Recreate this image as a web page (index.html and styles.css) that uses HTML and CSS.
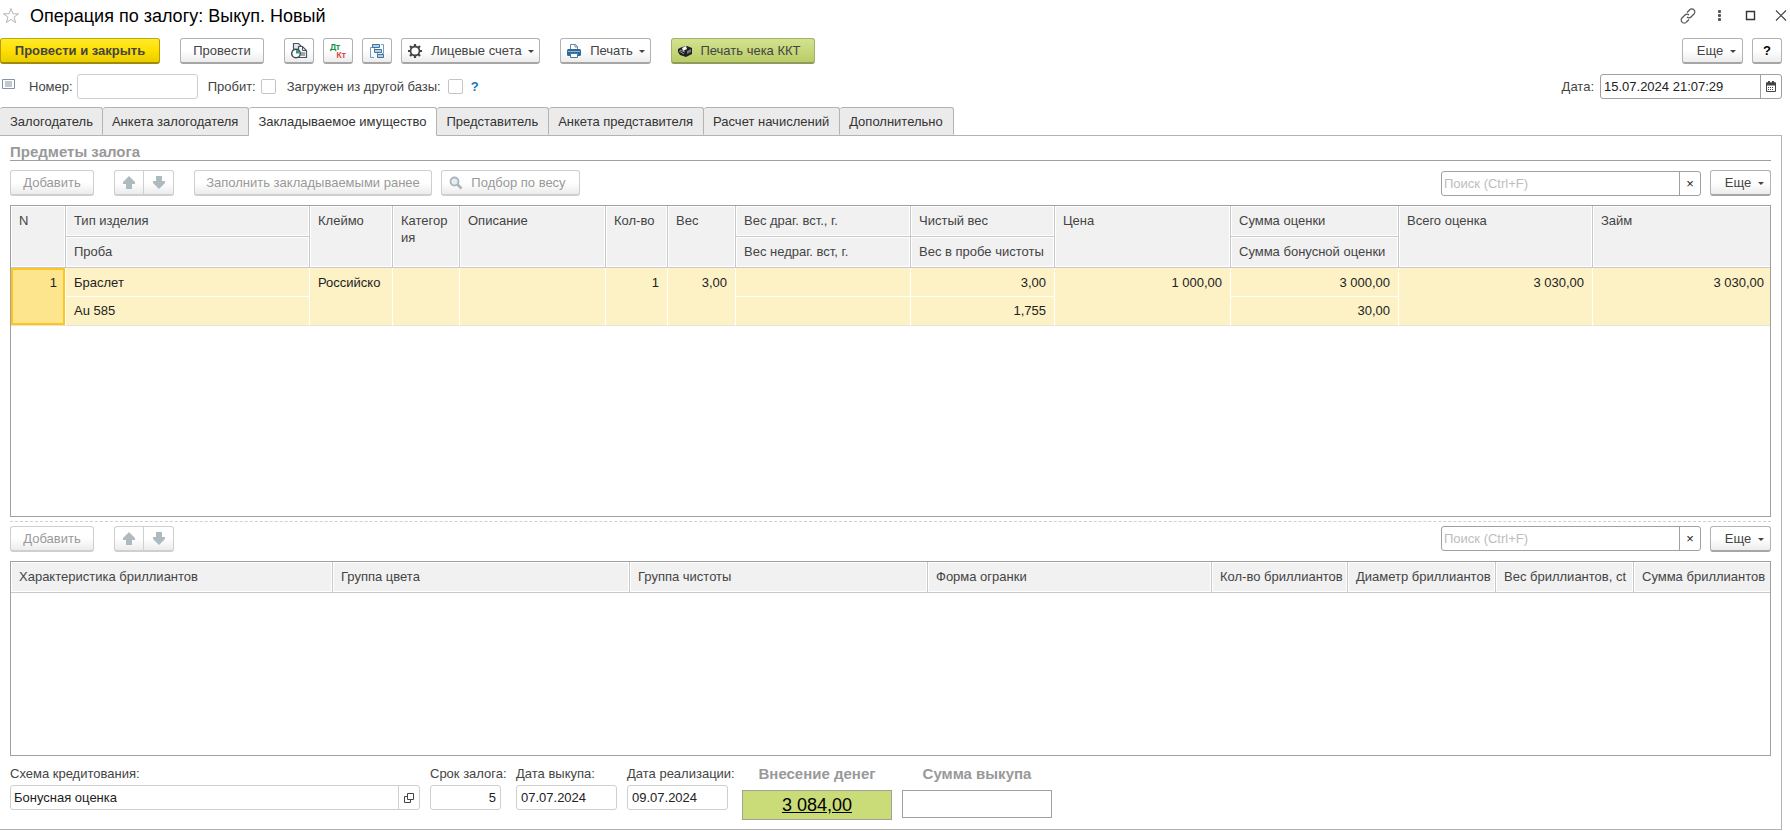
FILE: index.html
```html
<!DOCTYPE html>
<html lang="ru">
<head>
<meta charset="utf-8">
<title>Операция по залогу: Выкуп. Новый</title>
<link rel="stylesheet" href="styles.css">
</head>
<body>
<svg class="defs" width="0" height="0" aria-hidden="true">
  <symbol id="up" viewBox="0 0 12 13"><path d="M6 0l6 6v2H9v5H3V8H0V6z" fill="currentColor"/></symbol>
  <symbol id="down" viewBox="0 0 12 13"><path d="M6 13l6-6V5H9V0H3v5H0v2z" fill="currentColor"/></symbol>
</svg>
<main class="window">
  <header class="titlebar">
    <button class="plain" aria-label="В избранное"><svg width="18" height="18" viewBox="0 0 18 18"><path d="M9 1.500l1.900 5.300h5.600l-4.500 3.400 1.700 5.500L9 12.400l-4.700 3.300L6 10.200 1.500 6.800h5.600z" fill="#fff" stroke="#b4b4b4"/></svg></button>
    <h1>Операция по залогу: Выкуп. Новый</h1>
    <div class="window-tools">
      <button class="plain" aria-label="Ссылка"><svg width="16" height="16" viewBox="0 0 16 16" fill="none" stroke="#555" stroke-width="1.200"><path d="M7 4.500l2.500-2.500a2.700 2.700 0 0 1 4.500 0 2.800 2.800 0 0 1 0 4L11 9a2.700 2.700 0 0 1-4 0M9 11.500L6.500 14a2.700 2.700 0 0 1-4.500 0 2.800 2.800 0 0 1 0-4L5 7a2.700 2.700 0 0 1 4 0"/></svg></button>
      <button class="plain" aria-label="Меню"><svg width="16" height="16" viewBox="0 0 16 16" fill="#555"><rect x="7" y="2" width="3" height="3" rx="1"/><rect x="7" y="6" width="3" height="3" rx="1"/><rect x="7" y="10" width="3" height="3" rx="1"/></svg></button>
      <button class="plain" aria-label="Развернуть"><svg width="16" height="16" viewBox="0 0 16 16"><path d="M4.500 3.500h8v8h-8z" fill="none" stroke="#333" stroke-width="1.400"/></svg></button>
      <button class="plain" aria-label="Закрыть"><svg width="16" height="16" viewBox="0 0 16 16"><path d="M3 2.500l10 10M13 2.500l-10 10" stroke="#444" stroke-width="1.200"/></svg></button>
    </div>
  </header>

  <div class="commands">
    <button class="btn primary">Провести и закрыть</button>
    <button class="btn post">Провести</button>
    <div class="group">
      <button class="btn square" aria-label="Структура подчиненности"><svg width="18" height="18" viewBox="0 0 18 18"><path d="M3.500 12V1.500h5l3 3v2" fill="#e4e9ee" stroke="#4a5563" stroke-width="1.200"/><path d="M8.500 4.500h4l4 4v7h-8z" fill="#f3f5f7" stroke="#4a5563" stroke-width="1.200"/><path d="M12.500 4.500v4h4M11 11h4M11 13h4" fill="none" stroke="#4a5563"/><circle cx="6" cy="11.500" r="4.300" fill="#fff" stroke="#3d4956" stroke-width="1.500"/><path d="M6 11.500V8a3.500 3.500 0 0 1 3.500 3.500z" fill="#28a55b"/></svg></button>
      <button class="btn square dtkt" aria-label="Движения документа"><span class="dt">Дт</span><span class="kt">Кт</span></button>
      <button class="btn square" aria-label="Связанные документы"><svg width="16" height="16" viewBox="0 0 16 16" fill="none" stroke="#6f9cc0"><path d="M4 4.500H1.500v10H5M12 1.500h2.500v9H13M5.500 4.500v3M8.500 9.500v3"/><path d="M3.500 1.500h7v3h-7zM5.500 6.500h7v3h-7zM8.500 11.500h6v3h-6z" fill="#b4cfe4" stroke="#41729d"/></svg></button>
      <button class="btn accounts"><svg width="16" height="16" viewBox="0 0 16 16" fill="none" stroke="#444"><circle cx="8" cy="8" r="4.500" stroke-width="1.800"/><path d="M8 1v2.500M8 12.500V15M1 8h2.500M12.500 8H15M3 3l2 2M11 11l2 2M3 13l2-2M11 5l2-2" stroke-width="2.200"/></svg>Лицевые счета<i class="caret"></i></button>
    </div>
    <button class="btn print"><svg width="16" height="16" viewBox="0 0 16 16"><path d="M4.500 7V1.500h5l2 2V7" fill="#fff" stroke="#6d87a3"/><path d="M9 1v3h3" fill="none" stroke="#6d87a3"/><rect x="1" y="6" width="14" height="7" rx="1.500" fill="#2f689b"/><path d="M2 8.500h12" stroke="#94b6d0"/><path d="M4.500 10.500h7v4h-7z" fill="#fff" stroke="#48779f"/></svg>Печать<i class="caret"></i></button>
    <button class="btn receipt"><svg width="16" height="14" viewBox="0 0 16 14"><path d="M1 5l4-2 5-1 5 2v6l-6 3-6-2-2-3z" fill="#202020"/><path d="M5 4l4-2 1 3-4 2z" fill="#f4f4f4"/><path d="M10 7l4-2v3l-4 2z" fill="#777"/><path d="M2 7l5 3M3 6l5 2" stroke="#999" stroke-width="1"/></svg>Печать чека ККТ</button>
    <button class="btn more end">Еще<i class="caret"></i></button>
    <button class="btn square help">?</button>
  </div>

  <div class="fields">
    <svg class="note" width="13" height="11" viewBox="0 0 13 11" fill="none" stroke="#8293a5"><path d="M.5.5h12v9H.5z"/><path d="M3 3h7M3 5h7M3 7h7"/></svg>
    <label for="number">Номер:</label><input class="box number" id="number" type="text">
    <label for="fiscal">Пробит:</label><input class="check first" id="fiscal" type="checkbox">
    <label for="loaded">Загружен из другой базы:</label><input class="check" id="loaded" type="checkbox">
    <button class="plain hint" aria-label="Подсказка">?</button>
    <label class="end" for="date">Дата:</label>
    <div class="box combo dark date"><input id="date" type="text" value="15.07.2024 21:07:29"><button aria-label="Календарь"><svg width="10" height="11" viewBox="0 0 10 11"><path d="M.5 2h9v8.500h-9z" fill="#fff" stroke="#444"/><path d="M0 1.500h10v3H0zM2 0h2v2H2zM6 0h2v2H6z" fill="#444"/><path d="M2 6.500h6M2 8.500h6" stroke="#444" stroke-dasharray="1 1"/></svg></button></div>
  </div>

  <nav class="tabs" role="tablist">
    <button role="tab">Залогодатель</button><button role="tab">Анкета залогодателя</button><button role="tab" aria-selected="true">Закладываемое имущество</button><button role="tab">Представитель</button><button role="tab">Анкета представителя</button><button role="tab">Расчет начислений</button><button role="tab">Дополнительно</button>
  </nav>

  <section class="panel">
    <h2>Предметы залога</h2>
    <div class="tools">
      <button class="btn add" disabled>Добавить</button>
      <div class="arrows"><button class="btn" disabled aria-label="Вверх"><svg width="12" height="13"><use href="#up"/></svg></button><button class="btn" disabled aria-label="Вниз"><svg width="12" height="13"><use href="#down"/></svg></button></div>
      <button class="btn fill" disabled>Заполнить закладываемыми ранее</button>
      <button class="btn pick" disabled><svg width="14" height="14" viewBox="0 0 14 14"><circle cx="5.500" cy="5.500" r="4" fill="#e8edf0" stroke="#a9b4bb" stroke-width="1.800"/><path d="M8.500 8.500l4 4" stroke="#a9b4bb" stroke-width="2.500"/></svg>Подбор по весу</button>
      <div class="box combo dark search end"><input type="text" placeholder="Поиск (Ctrl+F)" aria-label="Поиск предметов"><button aria-label="Очистить">×</button></div>
      <button class="btn more small">Еще<i class="caret"></i></button>
    </div>

    <div class="grid items">
      <table>
        <colgroup><col class="w55"><col class="w244"><col class="w83"><col class="w67"><col class="w146"><col class="w62"><col class="w68"><col class="w175"><col class="w144"><col class="w176"><col class="w168"><col class="w194"><col class="w179"></colgroup>
        <thead>
          <tr><th rowspan="2">N</th><th>Тип изделия</th><th rowspan="2">Клеймо</th><th rowspan="2" class="wrap">Категория</th><th rowspan="2">Описание</th><th rowspan="2">Кол-во</th><th rowspan="2">Вес</th><th>Вес драг. вст., г.</th><th>Чистый вес</th><th rowspan="2">Цена</th><th>Сумма оценки</th><th rowspan="2">Всего оценка</th><th rowspan="2">Займ</th></tr>
          <tr><th>Проба</th><th>Вес недраг. вст, г.</th><th>Вес в пробе чистоты</th><th>Сумма бонусной оценки</th></tr>
        </thead>
        <tbody>
          <tr><td rowspan="2" class="num current">1</td><td>Браслет</td><td rowspan="2">Российско</td><td rowspan="2"></td><td rowspan="2"></td><td rowspan="2" class="num">1</td><td rowspan="2" class="num">3,00</td><td></td><td class="num">3,00</td><td rowspan="2" class="num">1 000,00</td><td class="num">3 000,00</td><td rowspan="2" class="num">3 030,00</td><td rowspan="2" class="num">3 030,00</td></tr>
          <tr><td>Au 585</td><td></td><td class="num">1,755</td><td class="num">30,00</td></tr>
        </tbody>
      </table>
    </div>

    <hr class="splitter">

    <div class="tools lower">
      <button class="btn add" disabled>Добавить</button>
      <div class="arrows"><button class="btn" disabled aria-label="Вверх"><svg width="12" height="13"><use href="#up"/></svg></button><button class="btn" disabled aria-label="Вниз"><svg width="12" height="13"><use href="#down"/></svg></button></div>
      <div class="box combo dark search end"><input type="text" placeholder="Поиск (Ctrl+F)" aria-label="Поиск бриллиантов"><button aria-label="Очистить">×</button></div>
      <button class="btn more small">Еще<i class="caret"></i></button>
    </div>

    <div class="grid stones">
      <table>
        <colgroup><col class="w322"><col class="w297"><col class="w298"><col class="w284"><col class="w136"><col class="w148"><col class="w138"><col class="w138"></colgroup>
        <thead><tr><th>Характеристика бриллиантов</th><th>Группа цвета</th><th>Группа чистоты</th><th>Форма огранки</th><th>Кол-во бриллиантов</th><th>Диаметр бриллиантов</th><th>Вес бриллиантов, ct</th><th>Сумма бриллиантов</th></tr></thead>
      </table>
    </div>

    <div class="summary">
      <div class="field scheme"><label for="scheme">Схема кредитования:</label><div class="box combo"><input id="scheme" type="text" value="Бонусная оценка"><button aria-label="Открыть"><svg width="10" height="10" viewBox="0 0 10 10" fill="none" stroke="#444"><path d="M3.500.5h6v6h-6z"/><path d="M3 3.500H.5v6h6V7"/></svg></button></div></div>
      <div class="field term"><label for="term">Срок залога:</label><input class="box" id="term" type="text" value="5"></div>
      <div class="field redeem"><label for="redeem">Дата выкупа:</label><input class="box" id="redeem" type="text" value="07.07.2024"></div>
      <div class="field sale"><label for="sale">Дата реализации:</label><input class="box" id="sale" type="text" value="09.07.2024"></div>
      <div class="field total"><span class="caption">Внесение денег</span><a class="amount" href="#">3 084,00</a></div>
      <div class="field total"><label class="caption" for="sum">Сумма выкупа</label><input class="sum" id="sum" type="text"></div>
    </div>
  </section>
</main>
</body>
</html>
```

FILE: styles.css
```css
* { box-sizing: border-box; }

body {
  margin: 0;
  background: #fff;
  color: #444;
  font: 13px/17px "Liberation Sans", Arial, sans-serif;
}

button, input { font: inherit; color: inherit; }
button { padding: 0; }
svg { flex: none; display: block; }
.defs { position: absolute; }

.window {
  display: flex;
  flex-direction: column;
  min-height: 100vh;
  padding-bottom: 1px;
}

.plain { border: 0; background: none; }
.end { margin-left: auto; }

/* Title */
.titlebar {
  display: flex;
  align-items: center;
  height: 31px;
  padding-left: 2px;
}
h1 {
  margin: 0 0 0 10px;
  font-size: 18px;
  line-height: 22px;
  font-weight: 400;
  color: #000;
}
.window-tools { display: flex; gap: 15px; margin-left: auto; padding-right: 1px; }

/* Command bar */
.commands {
  display: flex;
  align-items: center;
  gap: 20px;
  padding: 7px 8px 0 0;
}
.group { display: flex; gap: 9px; }

.btn {
  display: flex;
  align-items: center;
  justify-content: center;
  height: 26px;
  border: 1px solid #b3b3b3;
  border-bottom: 2px solid #a6a6a6;
  border-radius: 3px;
  background: linear-gradient(#fff 50%, #ececec);
  color: #444;
  white-space: nowrap;
}
.btn:disabled { border-color: #cfcfcf; color: #999; }
.btn:disabled svg { color: #afb9c0; }

.primary {
  width: 160px;
  border-color: #c4a900 #b39b00 #a18b00;
  background: linear-gradient(#ffea2e, #ffe000 50%, #e8cc00);
  font-weight: 700;
}
.post { width: 84px; }
.square { width: 30px; }
.accounts { width: 139px; gap: 8px; }
.print { width: 91px; gap: 8px; }
.receipt {
  width: 144px;
  gap: 7px;
  padding-right: 8px;
  border-color: #a3b06a #a3b06a #8f9b5c;
  background: linear-gradient(#d3e28f, #b9cc66);
}
.more { width: 61px; gap: 7px; padding-left: 8px; }
.help { margin-left: -11px; color: #000; font-weight: 700; }

.caret {
  margin-top: 2px;
  border: 3px solid transparent;
  border-top-color: #444;
  border-bottom: 0;
}
.accounts .caret, .print .caret { margin-left: -2px; }

.dtkt { flex-direction: column; font: 700 8px/8px "Noto Sans", sans-serif; }
.dt { color: #159447; padding-right: 6px; }
.kt { color: #dc4747; padding-left: 6px; }

/* Document fields */
.fields {
  display: flex;
  align-items: center;
  padding: 10px 8px 8px 2px;
}
.note { margin: 0 14px 4px 0; }
.box {
  height: 25px;
  border: 1px solid #cfcfcf;
  border-radius: 3px;
  background: #fff;
  color: #222;
}
input.box { padding: 0 4px; }
.number { width: 121px; margin: 0 10px 0 4px; }
.check {
  appearance: none;
  width: 15px;
  height: 15px;
  margin: 0 8px 0 7px;
  border: 1px solid #c4c4c4;
  border-radius: 2px;
  background: #fff;
}
.check.first { margin: 0 11px 0 5px; }
.hint { color: #1478be; font-weight: 700; }

.combo { display: flex; overflow: hidden; }
.combo.dark, .combo.dark button { border-color: #a0a0a0; }
.combo input {
  flex: 1;
  min-width: 0;
  padding: 0 3px;
  border: 0;
  background: none;
}
.combo button {
  display: flex;
  align-items: center;
  justify-content: center;
  width: 21px;
  border: 0;
  border-left: 1px solid #cfcfcf;
  background: none;
}
.combo input::placeholder { color: #bdbdbd; }
.date { width: 182px; margin-left: 6px; }

/* Tabs */
.tabs { display: flex; }
.tabs button {
  height: 28px;
  padding: 0 10px 0 9px;
  border: 1px solid #b3b3b3;
  border-left: 0;
  border-bottom-color: #ebebeb;
  border-radius: 3px 3px 0 0;
  background: #ebebeb;
  color: #333;
  white-space: nowrap;
}
.tabs button:first-child { padding: 0 9px 0 10px; }
.tabs button[aria-selected="true"] {
  position: relative;
  margin-bottom: -1px;
  height: 29px;
  padding-bottom: 1px;
  border-bottom-color: #fff;
  background: #fff;
}

.panel {
  flex: 1;
  display: flex;
  flex-direction: column;
  margin-right: 8px;
  padding: 8px 10px 9px;
  border: 1px solid #b3b3b3;
  border-left: 0;
}
h2 {
  margin: 0 0 9px;
  border-bottom: 1px solid #a0a0a0;
  font-size: 15px;
  line-height: 16px;
}
h2, .caption { color: #999; font-weight: 700; }

.tools { display: flex; align-items: center; margin-bottom: 9px; }
.add { width: 84px; }
.arrows { display: flex; margin: 0 20px; }
.arrows .btn { width: 30px; border-radius: 3px 0 0 3px; }
.arrows .btn + .btn { border-left: 0; border-radius: 0 3px 3px 0; }
.fill { width: 238px; margin-right: 9px; }
.pick { width: 139px; gap: 8px; padding-right: 6px; }
.search { width: 260px; margin-right: 9px; }
.search input { padding: 0 2px; }

/* Data grids */
.grid { border: 1px solid #a0a0a0; overflow: auto; }
.items { flex: 312 1 0; }
.stones { flex: 195 1 0; }
table { width: 100%; table-layout: fixed; border-spacing: 0; }
th, td {
  padding: 0 8px;
  text-align: left;
  vertical-align: top;
  font-weight: 400;
  white-space: nowrap;
  overflow: hidden;
}
th {
  height: 31px;
  padding-top: 6px;
  border-right: 1px solid #c9c9c9;
  border-bottom: 1px solid #c9c9c9;
  background: #f1f1f1;
  box-shadow: inset 0 0 0 1px #fff;
}
tr:first-child th:last-child { border-right: 0; }
thead tr + tr th:last-child { border-right: 1px solid #c9c9c9; }
th.wrap { white-space: normal; word-break: break-all; }
td {
  height: 29px;
  padding-top: 5px;
  border-right: 1px solid #fff;
  border-bottom: 1px solid #fff;
  background: #fdf1c6;
  color: #222;
}
tbody tr:first-child td:last-child { border-right: 0; }
td[rowspan], tbody tr + tr td { border-bottom-color: #e6e2d8; }
tbody tr:first-child td { padding-top: 6px; }
td.num { text-align: right; }
td.current { background: #fde58e; box-shadow: inset 0 0 0 2px #fcc61e; }

.w55 { width: 55px; } .w244 { width: 244px; } .w83 { width: 83px; }
.w67 { width: 67px; } .w146 { width: 146px; } .w62 { width: 62px; }
.w68 { width: 68px; } .w175 { width: 175px; } .w144 { width: 144px; }
.w176 { width: 176px; } .w168 { width: 168px; } .w194 { width: 194px; }
.w179 { width: 179px; }
.w322 { width: 322px; } .w297 { width: 297px; } .w298 { width: 298px; }
.w284 { width: 284px; } .w136 { width: 136px; } .w148 { width: 148px; }
.w138 { width: 138px; }

.splitter {
  width: 100%;
  margin: 4px 0;
  border: 0;
  border-top: 1px dashed #d0d0d0;
}

/* Summary */
.summary { display: flex; gap: 10px; padding-top: 9px; }
.field { display: flex; flex-direction: column; gap: 3px; white-space: nowrap; }
.scheme { width: 410px; }
.term { width: 76px; }
.term .box { width: 71px; text-align: right; }
.redeem { width: 101px; }
.sale { width: 105px; }
.sale .box { width: 101px; }
.total { width: 150px; gap: 8px; }
.caption { font-size: 15px; text-align: center; }
.amount {
  height: 30px;
  border: 1px solid #a0a0a0;
  background: #c9dc78;
  color: #000;
  font-size: 18px;
  line-height: 28px;
  text-align: center;
}
.sum { height: 28px; border: 1px solid #a0a0a0; }
```
